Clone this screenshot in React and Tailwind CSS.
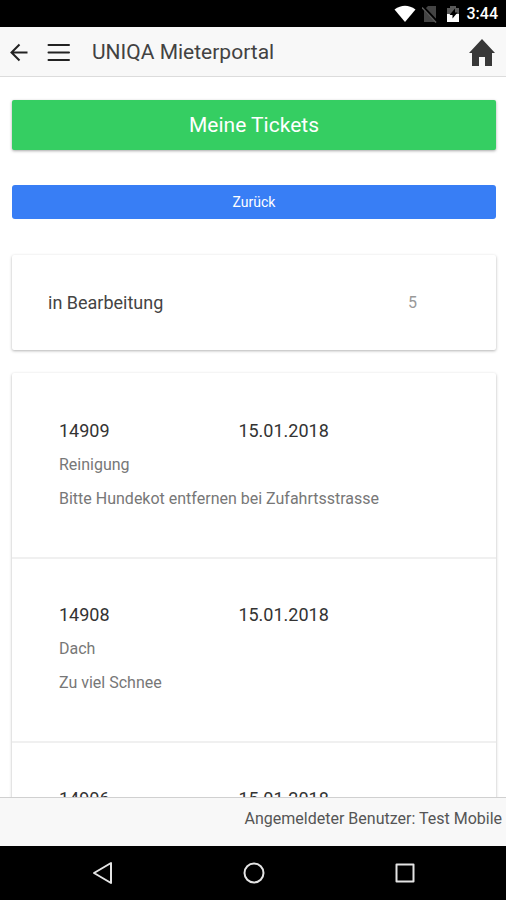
import React from 'react';

const STATUS_LABELS = { active: 'in Bearbeitung', count: 5 };

const TICKETS = [
  { id: '14909', date: '15.01.2018', category: 'Reinigung', text: 'Bitte Hundekot entfernen bei Zufahrtsstrasse' },
  { id: '14908', date: '15.01.2018', category: 'Dach', text: 'Zu viel Schnee' },
  { id: '14906', date: '15.01.2018', category: '', text: '' },
];

const StatusBar = () => (
  <div className="flex h-[27px] shrink-0 items-center justify-end bg-black pt-px pr-2 text-white">
    <svg width="22" height="18" viewBox="0 0 22 18" className="mr-[6px]">
      <path d="M0.5 4.5 Q11 -3 21.5 4.5 L11 17 Z" fill="#fff" />
    </svg>
    <svg width="16" height="18" viewBox="0 0 16 18" className="mr-[9px]">
      <path d="M6 1 H14 V17 H2 V5 Z" fill="#444" />
      <path d="M0 1 L15 17" stroke="#000" strokeWidth="3" />
      <path d="M0 2.5 L14 17.5" stroke="#5a5a5a" strokeWidth="1.5" />
    </svg>
    <svg width="12" height="18" viewBox="0 0 12 18" className="mr-2">
      <path d="M0 3 H3 V1 H9 V3 H12 V9 H0 Z" fill="#5a5a5a" />
      <path d="M0 9 H12 V17 H0 Z" fill="#fff" />
      <path d="M8 3.5 L2.5 10 H5.5 V13.5 L10.5 7.5 H8 Z" fill="#000" />
    </svg>
    <span className="text-[16px] leading-none font-medium">3:44</span>
  </div>
);

const Header = () => (
  <header className="flex h-[50px] shrink-0 items-center border-b border-[#dcdcdc] bg-[#f8f8f8] pr-[11px] pl-[9px]">
    <button type="button" aria-label="Zurück zur Übersicht">
      <svg width="20" height="20" viewBox="0 0 20 20" fill="none" stroke="#222" strokeWidth="2">
        <path d="M18.5 10.5 H2.5 M10.5 2.5 L2.5 10.5 L10.5 18.5" />
      </svg>
    </button>
    <button type="button" aria-label="Menü" className="ml-[18px]">
      <svg width="24" height="20" viewBox="0 0 24 20" stroke="#222" strokeWidth="2" strokeLinecap="round">
        <path d="M1.5 3 H22 M1.5 10.5 H22 M1.5 18 H22" />
      </svg>
    </button>
    <h1 className="ml-[21px] flex-1 text-[21px] leading-7 text-[#424242]">UNIQA Mieterportal</h1>
    <button type="button" aria-label="Startseite">
      <svg width="26" height="28" viewBox="0 0 26 28">
        <path d="M13 1 L26 15 H23 V28 H16 V19 H10 V28 H3 V15 H0 Z" fill="#383838" />
      </svg>
    </button>
  </header>
);

const TicketItem = ({ ticket }) => (
  <li className="border-b-2 border-[#f0f0f0] px-[47px] pt-[39px] pb-[41px] leading-[34px]">
    <div className="flex text-[18px] text-[#333]">
      <span className="w-[46%]">{ticket.id}</span>
      <span>{ticket.date}</span>
    </div>
    <p className="text-[16px] text-[#777]">{ticket.category}</p>
    <p className="text-[16px] text-[#777]">{ticket.text}</p>
  </li>
);

const NavigationBar = () => (
  <nav className="flex h-[54px] shrink-0 items-center justify-around bg-black pr-[26px] pl-7">
    <button type="button" aria-label="Zurück">
      <svg width="24" height="24" viewBox="0 0 24 24" fill="none" stroke="#e4e4e4" strokeWidth="2" strokeLinejoin="round">
        <path d="M20 2 V22 L3 12 Z" />
      </svg>
    </button>
    <button type="button" aria-label="Home">
      <svg width="24" height="24" viewBox="0 0 24 24" fill="none" stroke="#e4e4e4" strokeWidth="2">
        <circle cx="12" cy="12" r="9.5" />
      </svg>
    </button>
    <button type="button" aria-label="Letzte Apps">
      <svg width="24" height="24" viewBox="0 0 24 24" fill="none" stroke="#e4e4e4" strokeWidth="2" strokeLinejoin="round">
        <rect x="3.5" y="3.5" width="17" height="17" />
      </svg>
    </button>
  </nav>
);

const App = () => {
  return (
    <div className="flex h-screen flex-col overflow-hidden bg-white font-['Roboto',sans-serif]">
      <StatusBar />
      <Header />

      <main className="min-h-0 flex-1 overflow-hidden pt-[23px] pr-[10px] pl-3">
        <h2 className="rounded-[2px] bg-[#35ce62] text-center text-[21px] leading-[50px] text-white shadow-[0_1px_3px_rgba(0,0,0,0.35)]">
          Meine Tickets
        </h2>

        <button
          type="button"
          className="mt-[35px] block w-full rounded-[3px] bg-[#387ef5] text-center text-[14px] leading-[34px] text-white"
        >
          Zurück
        </button>

        {/* Status summary */}
        <section className="mt-9 flex items-center rounded-[2px] pr-[79px] pl-9 leading-[95px] shadow-[0_1px_3px_rgba(0,0,0,0.3)]">
          <span className="flex-1 text-[18px] text-[#444]">{STATUS_LABELS.active}</span>
          <span className="text-[16px] text-[#999]">{STATUS_LABELS.count}</span>
        </section>

        {/* Ticket list */}
        <ul className="mt-[23px] rounded-[2px] pt-[2px] shadow-[0_1px_3px_rgba(0,0,0,0.3)]">
          {TICKETS.map((ticket) => (
            <TicketItem key={ticket.id} ticket={ticket} />
          ))}
        </ul>
      </main>

      <footer className="h-[49px] shrink-0 border-t border-[#d0d0d0] bg-[#f8f8f8] pr-1 text-right text-[16px] leading-[42px] text-[#555]">
        Angemeldeter Benutzer: Test Mobile
      </footer>
      <NavigationBar />
    </div>
  );
};

export default App;
